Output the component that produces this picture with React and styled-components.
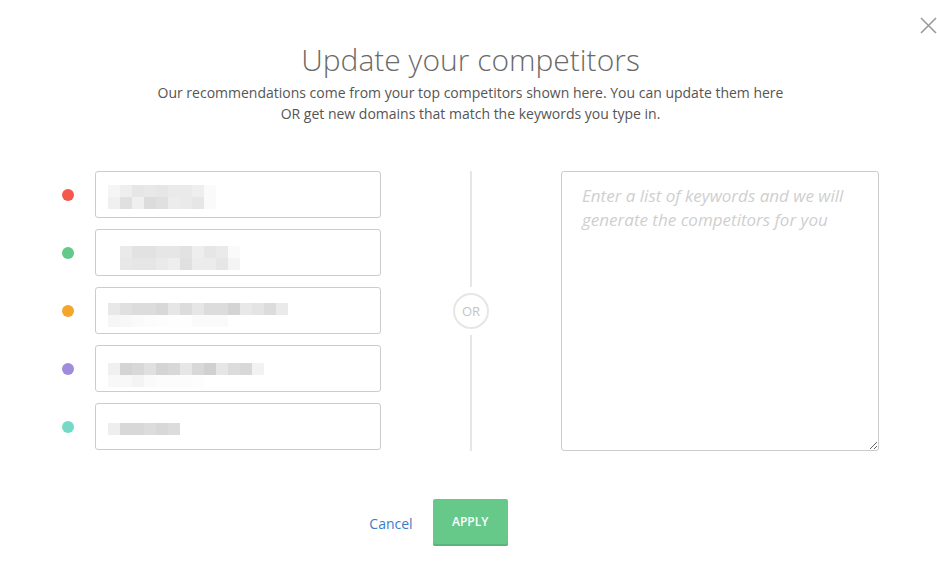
import React from "react";
import styled, { createGlobalStyle } from "styled-components";

const Global = createGlobalStyle`
  html, body { margin: 0; padding: 0; background: #fff; }
  body { font-family: "Open Sans", "Liberation Sans", sans-serif; color: #555; }
  * { box-sizing: border-box; }
`;

const Page = styled.div`
  position: relative;
  width: 937px;
  height: 574px;
  padding-top: 40px;
  padding-left: 4px;
  display: flex;
  flex-direction: column;
  align-items: center;
`;

const Close = styled.button`
  position: absolute;
  top: 17px;
  right: 0px;
  width: 17px;
  height: 17px;
  padding: 0;
  border: 0;
  background: transparent;
  cursor: pointer;
  display: flex;
`;

const Title = styled.h1`
  margin: 0;
  font-family: "Open Sans Light", "Open Sans", "Liberation Sans", sans-serif;
  font-size: 30px;
  line-height: 40px;
  font-weight: 300;
  color: #6a6a6a;
`;

const Subtitle = styled.p`
  margin: 2px 0 0;
  font-size: 14px;
  line-height: 21px;
  color: #555;
  text-align: center;
`;

const Body = styled.div`
  margin-top: 47px;
  display: grid;
  grid-template-columns: 319px 180px 318px;
  height: 280px;
`;

const List = styled.div`
  display: flex;
  flex-direction: column;
  gap: 11px;
`;

const Row = styled.div`
  display: flex;
  align-items: center;
  gap: 21px;
`;

const Dot = styled.span`
  width: 12px;
  height: 12px;
  border-radius: 50%;
  background: ${(p) => p.$color};
  flex: none;
`;

const Field = styled.div`
  width: 286px;
  height: 47px;
  border: 1px solid #ccc;
  border-radius: 3px;
  background: #fff;
  padding-left: ${(p) => p.$left}px;
  padding-top: ${(p) => p.$top}px;
`;

const Mosaic = styled.div`
  display: flex;
  flex-direction: column;
`;

const MosaicRow = styled.div`
  display: flex;
`;

const Cell = styled.span`
  width: 12px;
  height: 12px;
  background: ${(p) => p.$shade};
`;

const Divider = styled.div`
  display: flex;
  flex-direction: column;
  align-items: center;
`;

const Line = styled.div`
  width: 2px;
  flex: 1;
  background: #e6e6e6;
`;

const OrBadge = styled.div`
  width: 36px;
  height: 36px;
  margin: 6px 0;
  border-radius: 50%;
  border: 2px solid #e6e6e6;
  display: flex;
  align-items: center;
  justify-content: center;
  font-size: 13px;
  color: #c4c4c4;
`;

const Keywords = styled.textarea`
  width: 318px;
  height: 280px;
  border: 1px solid #ccc;
  border-radius: 3px;
  padding: 12px 20px;
  font-family: "Open Sans", "Liberation Sans", sans-serif;
  font-size: 17px;
  line-height: 24px;
  color: #555;
  resize: both;
  outline: none;
  &::placeholder {
    color: #cfcfcf;
    font-style: italic;
  }
`;

const Footer = styled.div`
  margin-top: 48px;
  margin-right: 62px;
  display: flex;
  align-items: center;
  gap: 20px;
`;

const Cancel = styled.a`
  font-size: 14px;
  color: #3b7dc6;
  text-decoration: none;
  cursor: pointer;
  margin-top: 1px;
  margin-left: -2px;
`;

const Apply = styled.button`
  width: 75px;
  height: 47px;
  border: 0;
  border-radius: 2px;
  background: #66c98a;
  box-shadow: inset 0 -2px 0 #58b67a;
  color: #fff;
  font-family: "Open Sans", "Liberation Sans", sans-serif;
  font-size: 12px;
  font-weight: 600;
  text-transform: uppercase;
  cursor: pointer;
  padding: 0 0 2px;
`;

const competitors = [
  {
    color: "#f4584a",
    left: 12,
    top: 13,
    rows: [
      ["#f5f5f5", "#eeeeee", "#e6e6e6", "#e8e8e8", "#e6e6e6", "#eaeaea", "#eaeaea", "#eeeeee", "#fafafa"],
      ["#f0f0f0", "#e0e0e0", "#efefef", "#dcdcdc", "#e0e0e0", "#ececec", "#eaeaea", "#e6e6e6", "#fafafa"],
    ],
  },
  {
    color: "#63c98a",
    left: 24,
    top: 16,
    rows: [
      ["#eaeaea", "#e2e2e2", "#e2e2e2", "#e6e6e6", "#e6e6e6", "#e2e2e2", "#eeeeee", "#e6e6e6", "#eaeaea", "#fafafa"],
      ["#e8e8e8", "#e6e6e6", "#e6e6e6", "#eaeaea", "#eeeeee", "#e0e0e0", "#ececec", "#ececec", "#e6e6e6", "#f4f4f4"],
    ],
  },
  {
    color: "#f4a62a",
    left: 12,
    top: 15,
    rows: [
      ["#e8e8e8", "#e0e0e0", "#dcdcdc", "#dcdcdc", "#d8d8d8", "#e6e6e6", "#dcdcdc", "#e6e6e6", "#dcdcdc", "#dcdcdc", "#d4d4d4", "#e8e8e8", "#e4e4e4", "#dcdcdc", "#eaeaea"],
      ["#f6f6f6", "#f8f8f8", "#fafafa", "#fcfcfc", "#fdfdfd", "#fefefe", "#fefefe", "#fafafa", "#fafafa", "#fafafa"],
    ],
  },
  {
    color: "#a08cdc",
    left: 12,
    top: 17,
    rows: [
      ["#f0f0f0", "#d4d4d4", "#d8d8d8", "#e0e0e0", "#d4d4d4", "#d8d8d8", "#e6e6e6", "#d8d8d8", "#d0d0d0", "#e6e6e6", "#dcdcdc", "#d8d8d8", "#f2f2f2"],
      ["#f8f8f8", "#f8f8f8", "#f4f4f4", "#fafafa", "#fcfcfc", "#fcfcfc", "#fcfcfc", "#fdfdfd"],
    ],
  },
  {
    color: "#76d8c6",
    left: 12,
    top: 19,
    rows: [["#eeeeee", "#d8d8d8", "#d8d8d8", "#dcdcdc", "#d8d8d8", "#dcdcdc"]],
  },
];

function CloseIcon() {
  return (
    <svg width="17" height="17" viewBox="0 0 17 17">
      <path d="M1 1 L16 16 M16 1 L1 16" stroke="#9a9a9a" strokeWidth="1.6" fill="none" />
    </svg>
  );
}

export default function App() {
  return (
    <>
      <Global />
      <Page>
        <Close aria-label="Close">
          <CloseIcon />
        </Close>
        <Title>Update your competitors</Title>
        <Subtitle>
          Our recommendations come from your top competitors shown here. You can update them here
          <br />
          OR get new domains that match the keywords you type in.
        </Subtitle>
        <Body>
          <List>
            {competitors.map((c, i) => (
              <Row key={i}>
                <Dot $color={c.color} />
                <Field $left={c.left} $top={c.top}>
                  <Mosaic>
                    {c.rows.map((r, j) => (
                      <MosaicRow key={j}>
                        {r.map((s, k) => (
                          <Cell key={k} $shade={s} />
                        ))}
                      </MosaicRow>
                    ))}
                  </Mosaic>
                </Field>
              </Row>
            ))}
          </List>
          <Divider>
            <Line />
            <OrBadge>OR</OrBadge>
            <Line />
          </Divider>
          <Keywords placeholder="Enter a list of keywords and we will generate the competitors for you" />
        </Body>
        <Footer>
          <Cancel>Cancel</Cancel>
          <Apply>Apply</Apply>
        </Footer>
      </Page>
    </>
  );
}
